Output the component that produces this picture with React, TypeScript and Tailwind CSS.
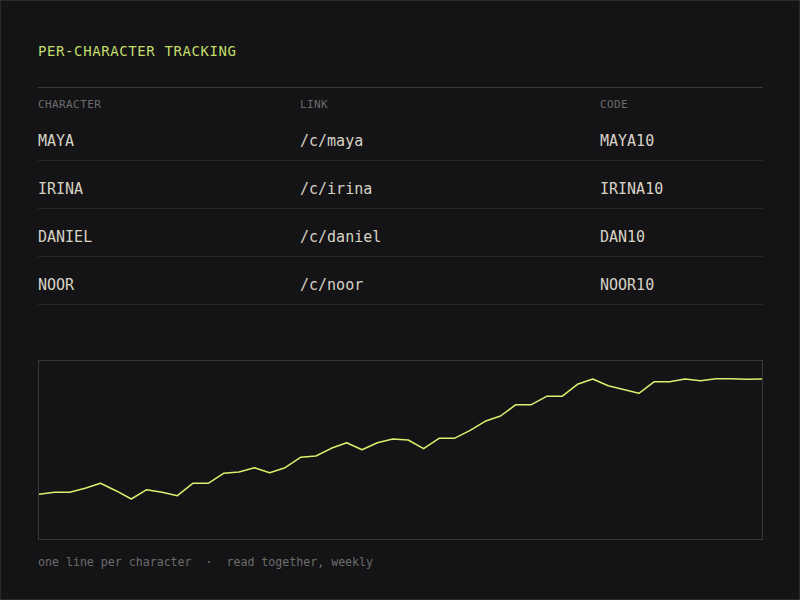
const rows = [
  { name: 'MAYA', link: '/c/maya', code: 'MAYA10' },
  { name: 'IRINA', link: '/c/irina', code: 'IRINA10' },
  { name: 'DANIEL', link: '/c/daniel', code: 'DAN10' },
  { name: 'NOOR', link: '/c/noor', code: 'NOOR10' },
];

// weekly reads, y offsets inside the 180px chart box
const points = [
  134.3, 132.3, 132.3, 128.3, 123.3, 130.7, 139, 129.7, 132.3, 135.7, 123.3, 123.3,
  113.3, 112, 107.7, 112.7, 107.7, 97.3, 96, 88.3, 82.7, 89.7, 82.7, 79,
  80, 88.7, 78.3, 78.3, 70.7, 61.3, 56, 44.7, 44.7, 36.3, 36.3, 24.3,
  19, 25.7, 29.5, 33.3, 21.7, 21.7, 19, 20.7, 18.7, 18.7, 19.3, 19,
];

function Chart() {
  const step = 723 / (points.length - 1);
  const d = points.map((y, i) => `${(i * step).toFixed(1)},${(y - 1).toFixed(1)}`).join(' ');
  return (
    <div className="mt-[55px] h-[180px] border border-[#38383a]">
      <svg width="723" height="178" viewBox="0 0 723 178" className="block">
        <polyline points={d} fill="none" stroke="#d6f26c" strokeWidth="1.5" strokeLinejoin="round" />
      </svg>
    </div>
  );
}

export default function App() {
  return (
    <div
      className="w-[800px] h-[600px] border border-[#2a2a2c] bg-[#141416] pl-[37px] pr-[36px] pt-[40px]"
      style={{ fontFamily: '"DejaVu Sans Mono", "Liberation Mono", monospace' }}
    >
      <div className="text-[14px] leading-[20px] tracking-[0.6px] text-[#c3dd6b]">PER-CHARACTER TRACKING</div>

      <div className="mt-[26px] border-t border-[#3a3a3c]">
        <div className="grid grid-cols-[262px_300px_1fr] pt-[10px] pb-[1px] text-[11px] leading-[14px] tracking-[0.4px] text-[#6c6c6c]">
          <div>CHARACTER</div>
          <div>LINK</div>
          <div>CODE</div>
        </div>
        {rows.map((r) => (
          <div
            key={r.name}
            className="grid grid-cols-[262px_300px_1fr] border-b border-[#262628] pt-[18px] pb-[9px] text-[15px] leading-[20px] text-[#d8d2c6]"
          >
            <div>{r.name}</div>
            <div>{r.link}</div>
            <div>{r.code}</div>
          </div>
        ))}
      </div>

      <Chart />

      <div className="mt-[14px] text-[11.6px] leading-[16px] text-[#6c6c6c] whitespace-pre">
        one line per character  ·  read together, weekly
      </div>
    </div>
  );
}
